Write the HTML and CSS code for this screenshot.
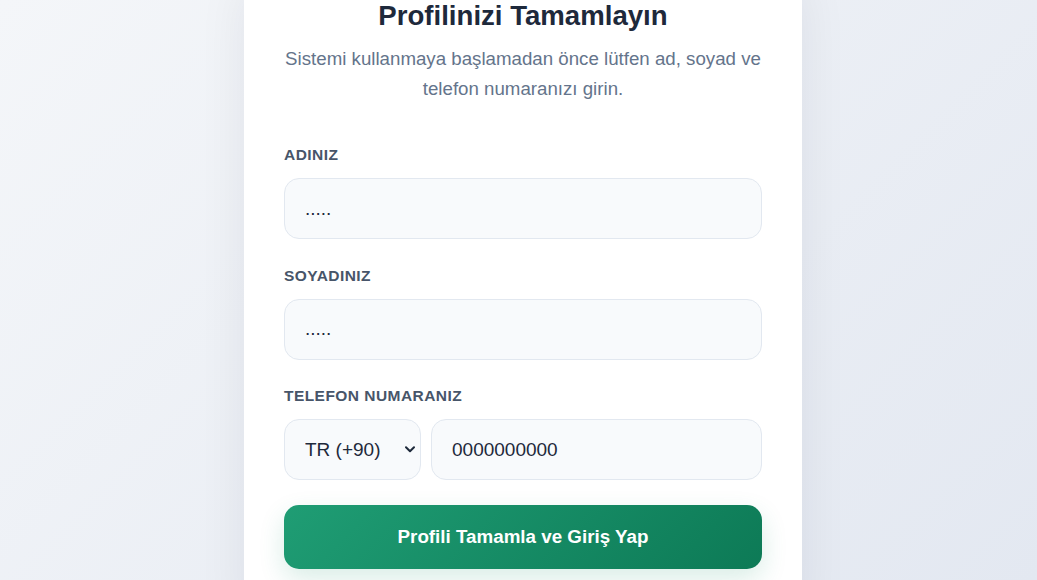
FILE: index.html
```html
<!DOCTYPE html>
<html lang="tr">
<head>
<meta charset="utf-8">
<title>Profilinizi Tamamlayın</title>
<link rel="stylesheet" href="styles.css">
</head>
<body>
<main class="page">
  <section class="card">
    <h1 class="title">Profilinizi Tamamlayın</h1>
    <p class="subtitle">Sistemi kullanmaya başlamadan önce lütfen ad, soyad ve telefon numaranızı girin.</p>
    <form class="form">
      <div class="group">
        <label class="label" for="ad">ADINIZ</label>
        <input class="field" id="ad" type="text" value=".....">
      </div>
      <div class="group">
        <label class="label" for="soyad">SOYADINIZ</label>
        <input class="field" id="soyad" type="text" value=".....">
      </div>
      <div class="group">
        <label class="label" for="tel">TELEFON NUMARANIZ</label>
        <div class="phone-row">
          <div class="select-wrap">
            <select class="field country">
              <option>TR (+90)</option>
            </select>
            <svg class="chevron" width="10" height="7" viewBox="0 0 10 7" aria-hidden="true">
              <path d="M1 1.2 L5 5.2 L9 1.2" fill="none" stroke="#1e293b" stroke-width="2" stroke-linecap="round" stroke-linejoin="round"/>
            </svg>
          </div>
          <input class="field phone" id="tel" type="tel" value="0000000000">
        </div>
      </div>
      <button class="submit" type="button">Profili Tamamla ve Giriş Yap</button>
    </form>
  </section>
</main>
</body>
</html>
```

FILE: styles.css
```css
* { box-sizing: border-box; }
html, body { margin: 0; padding: 0; }
body {
  font-family: "Liberation Sans", Arial, sans-serif;
  background: linear-gradient(135deg, #f4f6f9 0%, #e3e8f1 100%);
  min-height: 100vh;
  overflow: hidden;
}
.page {
  display: flex;
  justify-content: center;
  padding-left: 9px;
  height: 580px;
}
.card {
  width: 558px;
  margin-top: -40px;
  background: #ffffff;
  border-radius: 24px;
  padding: 40px 40px 40px;
  box-shadow: 0 20px 50px rgba(15, 23, 42, 0.07);
  align-self: flex-start;
}
.title {
  margin: 0 0 12px;
  text-align: center;
  font-size: 27.6px;
  line-height: 32px;
  font-weight: 700;
  color: #1e293b;
}
.subtitle {
  margin: 0 -8px 42px;
  text-align: center;
  font-size: 18.7px;
  line-height: 30px;
  color: #64748b;
}
.form { display: flex; flex-direction: column; }
.group { margin-bottom: 27.5px; }
.group:last-of-type { margin-bottom: 25px; }
.label {
  display: block;
  font-size: 15.5px;
  line-height: 17px;
  font-weight: 700;
  letter-spacing: 0.45px;
  color: #475569;
  margin-bottom: 15px;
}
.field {
  display: block;
  width: 100%;
  height: 61px;
  padding: 0 20px;
  font-family: "Liberation Sans", Arial, sans-serif;
  font-size: 19px;
  color: #1e293b;
  background: #f8fafc;
  border: 1px solid #e2e8f0;
  border-radius: 15px;
  outline: none;
}
.phone-row {
  display: flex;
  gap: 10px;
}
.select-wrap {
  position: relative;
  flex: 0 0 137px;
  width: 137px;
}
.country {
  appearance: none;
  -webkit-appearance: none;
  padding-left: 20px;
  padding-right: 24px;
}
.chevron {
  position: absolute;
  right: 6px;
  top: 27px;
  pointer-events: none;
}
.phone { flex: 1; }
.submit {
  height: 64px;
  width: 100%;
  border: none;
  border-radius: 15px;
  background: linear-gradient(135deg, #1f9d74 0%, #0d7a56 100%);
  color: #ffffff;
  font-family: "Liberation Sans", Arial, sans-serif;
  font-size: 18.8px;
  font-weight: 700;
  box-shadow: 0 10px 26px rgba(16, 140, 100, 0.16);
  cursor: pointer;
}
```
